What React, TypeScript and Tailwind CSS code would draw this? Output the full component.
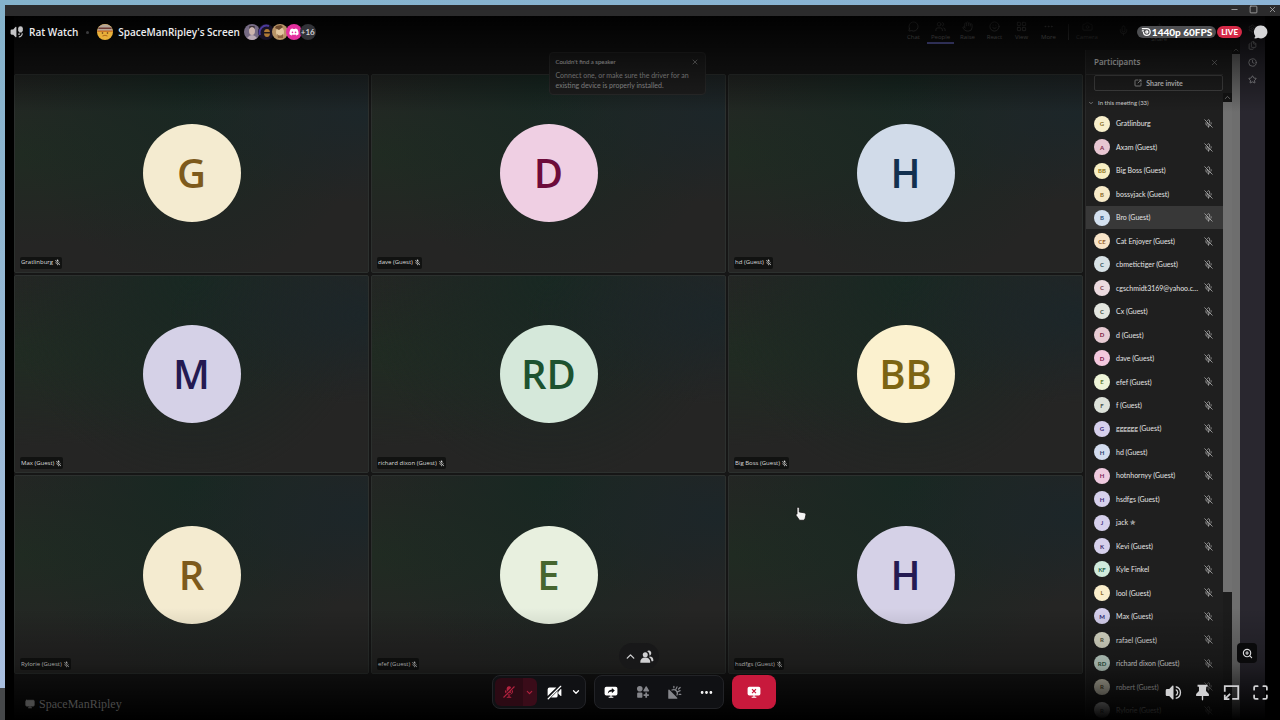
import React from 'react'
import { ChevronDown, ChevronUp, Clock, Hand, LayoutGrid, Camera, MessageCircle, Mic, MicOff, Monitor, MoreHorizontal, Minus, Settings, Share, Smile, Square, SquareArrowOutUpRight, Star, Users, X, ZoomIn, Files } from 'lucide-react'
import { MdMicOff } from 'react-icons/md'
import { FaDiscord } from 'react-icons/fa6'

type Tile = { initials: string; name: string; color: string }
type Participant = { initials: string; name: string; color: string; active?: boolean }

const tiles: Tile[] = [
  { initials: 'G', name: 'Gratlinburg', color: 'bg-[#f4ebd0] text-[#7d5a1c]' },
  { initials: 'D', name: 'dave (Guest)', color: 'bg-[#efcfe3] text-[#6d0b3a]' },
  { initials: 'H', name: 'hd (Guest)', color: 'bg-[#d1dbe9] text-[#12304f]' },
  { initials: 'M', name: 'Max (Guest)', color: 'bg-[#d5d1e7] text-[#241a52]' },
  { initials: 'RD', name: 'richard dixon (Guest)', color: 'bg-[#d5e8da] text-[#1d522f]' },
  { initials: 'BB', name: 'Big Boss (Guest)', color: 'bg-[#fbf1cf] text-[#7c6412]' },
  { initials: 'R', name: 'Rylorie (Guest)', color: 'bg-[#f4ebd0] text-[#7d5a1c]' },
  { initials: 'E', name: 'efef (Guest)', color: 'bg-[#e8f0df] text-[#46652f]' },
  { initials: 'H', name: 'hsdfgs (Guest)', color: 'bg-[#d5d1e7] text-[#241a52]' },
]

const participants: Participant[] = [
  { initials: 'G', name: 'Gratlinburg', color: 'bg-[#f8efcb] text-[#8a6f2a]' },
  { initials: 'A', name: 'Axam (Guest)', color: 'bg-[#e8c6d2] text-[#7a1f45]' },
  { initials: 'BB', name: 'Big Boss (Guest)', color: 'bg-[#f8efc4] text-[#8c7420]' },
  { initials: 'B', name: 'bossyjack (Guest)', color: 'bg-[#f8ebc9] text-[#8c6a2a]' },
  { initials: 'B', name: 'Bro (Guest)', color: 'bg-[#d3e0ef] text-[#2a4f7a]', active: true },
  { initials: 'CE', name: 'Cat Enjoyer (Guest)', color: 'bg-[#f8e4c8] text-[#96602a]' },
  { initials: 'C', name: 'cbmetictiger (Guest)', color: 'bg-[#d8e2e6] text-[#33525c]' },
  { initials: 'C', name: 'cgschmidt3169@yahoo.c...', color: 'bg-[#ecdadf] text-[#7a3a4a]' },
  { initials: 'C', name: 'Cx (Guest)', color: 'bg-[#e3e5df] text-[#4a4f45]' },
  { initials: 'D', name: 'd (Guest)', color: 'bg-[#e8ccd4] text-[#7a2040]' },
  { initials: 'D', name: 'dave (Guest)', color: 'bg-[#f4c8de] text-[#7a1048]' },
  { initials: 'E', name: 'efef (Guest)', color: 'bg-[#eef4d8] text-[#5e7a30]' },
  { initials: 'F', name: 'f (Guest)', color: 'bg-[#dde2da] text-[#44504a]' },
  { initials: 'G', name: 'gggggg (Guest)', color: 'bg-[#d6d0ec] text-[#3a2a78]' },
  { initials: 'H', name: 'hd (Guest)', color: 'bg-[#d3dcef] text-[#2a3f70]' },
  { initials: 'H', name: 'hotnhornyy (Guest)', color: 'bg-[#efcadf] text-[#7a1f58]' },
  { initials: 'H', name: 'hsdfgs (Guest)', color: 'bg-[#d6d0ec] text-[#3a2a78]' },
  { initials: 'J', name: 'jack ✯', color: 'bg-[#d6d0ec] text-[#4a3a88]' },
  { initials: 'K', name: 'Kevi (Guest)', color: 'bg-[#d6d0ec] text-[#3a2a68]' },
  { initials: 'KF', name: 'Kyle Finkel', color: 'bg-[#d0eadc] text-[#1f6248]' },
  { initials: 'L', name: 'lool (Guest)', color: 'bg-[#faeecb] text-[#8a6a2a]' },
  { initials: 'M', name: 'Max (Guest)', color: 'bg-[#d6d0ee] text-[#2a1f70]' },
  { initials: 'R', name: 'rafael (Guest)', color: 'bg-[#dedecb] text-[#55553a]' },
  { initials: 'RD', name: 'richard dixon (Guest)', color: 'bg-[#cfe3d8] text-[#2a5a44]' },
  { initials: 'R', name: 'robert (Guest)', color: 'bg-[#dedac6] text-[#5a5030]' },
  { initials: 'R', name: 'Rylorie (Guest)', color: 'bg-[#dedede] text-[#555555]' },
]

const toolbar = [
  { label: 'Chat', icon: MessageCircle },
  { label: 'People', icon: Users, active: true },
  { label: 'Raise', icon: Hand },
  { label: 'React', icon: Smile },
  { label: 'View', icon: LayoutGrid },
  { label: 'More', icon: MoreHorizontal },
]

const SpeakerIcon = ({ className }: { className: string }) => (
  <svg viewBox="0 0 24 24" className={className} fill="currentColor">
    <path d="M12 3.200a1 1 0 0 0-1.700-.7L6 7H3a2 2 0 0 0-2 2v6c0 1.100.9 2 2 2h3l4.300 4.500a1 1 0 0 0 1.700-.7z" />
    <path d="M15.200 7.200v2.100a3 3 0 0 1 0 5.400v2.100a5 5 0 0 0 0-9.600z" />
    <path d="M15.200 2.700v2.100a7.400 7.400 0 0 1 0 14.400v2.100a9.500 9.500 0 0 0 0-18.600z" />
  </svg>
)

// speaker with a small mic beside it, shown for a voice channel
const VoiceIcon = () => (
  <svg viewBox="0 0 24 24" className="size-[14px] text-[#c4c4c6]" fill="currentColor">
    <path d="M11 4a1 1 0 0 0-1.700-.7L5.500 7.500H3a2 2 0 0 0-2 2v5c0 1.100.9 2 2 2h2.500l3.800 4.200a1 1 0 0 0 1.700-.7z" />
    <path d="M14 6a4 4 0 0 1 8 0v4l-2 3h-4l-2-3z" />
    <path d="M14 14.500h3v2h-3zM20 14h2c0 4-3 7-7 7.500v-2c3-.4 5-2.600 5-5.500z" />
  </svg>
)

const MicSlashIcon = () => (
  <svg viewBox="0 0 24 24" className="size-[14px]" fill="currentColor">
    <path d="M8 6a4 4 0 0 1 7.700-1.500L8 12.200zM16 9.500V10a4 4 0 0 1-4.600 4zM5 10a1 1 0 0 1 2 0c0 1 .3 2 .8 2.800l-1.500 1.500A7 7 0 0 1 5 10zM9.900 15.500A5 5 0 0 0 17 10a1 1 0 1 1 2 0 7 7 0 0 1-6 6.900V20h2a1 1 0 1 1 0 2H9a1 1 0 1 1 0-2h2v-3.100a7 7 0 0 1-2.500-.9z" />
    <path d="M21.700 3.700a1 1 0 0 0-1.400-1.400l-18 18a1 1 0 0 0 1.400 1.400z" />
  </svg>
)

const CameraSlashIcon = () => (
  <svg viewBox="0 0 24 24" className="size-[15px]" fill="currentColor">
    <path d="M1 17.500V7a3 3 0 0 1 3-3h11zM6.500 20 17 9.500V17a3 3 0 0 1-3 3zM18 11l4-4.500c.5-.4 1 0 1 .6v10c0 .6-.5.9-1 .5L18 14z" />
    <path d="M22.700 2.700a1 1 0 0 0-1.400-1.400l-20 20a1 1 0 1 0 1.400 1.400z" />
  </svg>
)

const ScreenIcon = ({ className, stop = false }: { className: string; stop?: boolean }) => (
  <svg viewBox="0 0 24 24" className={className} fill="currentColor">
    <path fillRule="evenodd" d={stop
      ? 'M4 3h16a3 3 0 0 1 3 3v9a3 3 0 0 1-3 3h-7v2h3v2H8v-2h3v-2H4a3 3 0 0 1-3-3V6a3 3 0 0 1 3-3zm5.300 3.300L7.900 7.700l2.700 2.800-2.700 2.800 1.400 1.400 2.700-2.800 2.700 2.800 1.400-1.400-2.700-2.800 2.700-2.800-1.400-1.400L12 9z'
      : 'M4 3h16a3 3 0 0 1 3 3v9a3 3 0 0 1-3 3h-7v2h3v2H8v-2h3v-2H4a3 3 0 0 1-3-3V6a3 3 0 0 1 3-3zm9.500 2v2.500C9 7.800 6.800 10.500 6.500 15c1.500-2.700 3.700-3.700 7-3.800V14l5-4.500z'} />
  </svg>
)

const ActivitiesIcon = () => (
  <svg viewBox="0 0 24 24" className="size-[14px]" fill="currentColor">
    <circle cx="6.500" cy="6.500" r="4.800" />
    <path d="M16.600 2.600a1 1 0 0 1 1.800 0l4 7a1 1 0 0 1-.9 1.400h-8a1 1 0 0 1-.9-1.400z" />
    <rect x="2" y="13" width="9" height="9" rx="2" />
    <path d="M16 13h3v3h3v3h-3v3h-3v-3h-3v-3h3z" />
  </svg>
)

const SoundboardIcon = () => (
  <svg viewBox="0 0 24 24" className="size-[15px]" fill="none" stroke="currentColor" strokeWidth="2" strokeLinecap="round">
    <path d="M2 8.500V21c0 .6.400 1 1 1h12.500c1 0 1.500-1 .8-1.800L3.800 7.700C3.200 7 2 7.500 2 8.500z" fill="currentColor" stroke="none" />
    <path d="M8 8a6 6 0 0 1 8 8M11 2v2.500M16 3l-1.500 3.500M21 9l-3.500 1.500M22 15h-2.500M21 4l-2.500 2.500" />
  </svg>
)

const PeopleIcon = () => (
  <svg viewBox="0 0 24 24" className="size-[15px]" fill="currentColor">
    <circle cx="10" cy="9" r="4" />
    <path d="M2 21c0-5 3-7.500 8-7.500s8 2.500 8 7.500c0 .6-.4 1-1 1H3c-.6 0-1-.4-1-1z" />
    <path d="M13 3.500a4 4 0 1 1 3.500 6.900c.6-2.800-.6-5.300-3.500-6.900zM17 12c4 0 6 2.500 6 6.500 0 .6-.4 1-1 1h-2c-.3-3-1.500-5-3.800-6.300z" />
  </svg>
)

const PinIcon = () => (
  <svg viewBox="0 0 24 24" className="size-[17px]" fill="currentColor">
    <path d="M5 1h14v3h-2v6l4 4v3h-8v5l-1 1.500-1-1.500v-5H3v-3l4-4V4H5z" />
  </svg>
)

const PopoutIcon = () => (
  <svg viewBox="0 0 24 24" className="size-[17px]" fill="none" stroke="currentColor" strokeWidth="2.500">
    <path d="M2.500 11V3h19v18H13M10 14l-7.500 7.500M2.500 15v6.500H9" />
  </svg>
)

const FullscreenIcon = () => (
  <svg viewBox="0 0 24 24" className="size-[17px]" fill="none" stroke="currentColor" strokeWidth="2.500" strokeLinecap="round">
    <path d="M3 8V5a2 2 0 0 1 2-2h3M16 3h3a2 2 0 0 1 2 2v3M21 16v3a2 2 0 0 1-2 2h-3M8 21H5a2 2 0 0 1-2-2v-3" />
  </svg>
)

const StreamerAvatar = () => (
  <svg viewBox="0 0 16 16" className="size-4">
    <circle cx="8" cy="8" r="8" fill="#e8b03a" />
    <path d="M1 4.500a8 8 0 0 1 14 0l.6 2.500H.4z" fill="#b5a698" />
    <path d="M2 3.500h12L15 5H1z" fill="#6e3a34" />
    <path d="M.4 6.500h15.200v1.300H.2z" fill="#c4671f" />
    <circle cx="5.500" cy="9" r="0.800" fill="#5a3214" />
    <circle cx="10.500" cy="9" r="0.800" fill="#5a3214" />
    <path d="M5.500 12q2.500-1.500 5 0" stroke="#b3681b" fill="none" />
  </svg>
)

const Viewers = () => (
  <div className="ml-1 flex items-center">
    <svg viewBox="0 0 16 16" className="size-4">
      <circle cx="8" cy="8" r="8" fill="#756a83" />
      <ellipse cx="8" cy="7" rx="3" ry="4" fill="#cdb5ae" />
      <path d="M5 5q3-4 6 0l-.5-3h-5z" fill="#3d3238" />
      <path d="M3 14q5-6 10 0-5 4-10 0z" fill="#b9a9b4" />
    </svg>
    <svg viewBox="0 0 16 16" className="-ml-0.5 size-4">
      <circle cx="8" cy="8" r="8" fill="#191326" />
      <path d="M2 11a7 7 0 0 1 9-9" stroke="#4b3a9a" strokeWidth="2" fill="none" />
      <ellipse cx="9" cy="9" rx="3" ry="4" fill="#b07a35" />
      <path d="M6 8h6v1.500H6z" fill="#241a1a" />
    </svg>
    <svg viewBox="0 0 16 16" className="-ml-0.5 size-4">
      <circle cx="8" cy="8" r="8" fill="#b89467" />
      <ellipse cx="8" cy="8" rx="4" ry="5" fill="#e2c7a0" />
      <path d="M3 4l4 2 4-3-2-2-5 1z" fill="#6d4a2e" />
      <path d="M5 10q3 3 6 0v4H6z" fill="#8d6440" />
    </svg>
    <span className="-ml-0.5 flex size-4 items-center justify-center rounded-full bg-[#e4309f] text-white">
      <FaDiscord size={10} />
    </span>
    <span className="-ml-0.5 flex size-4 items-center justify-center rounded-full bg-[#323338] font-['Lato',sans-serif] text-[8px] font-bold text-[#d0d0d4]">+16</span>
  </div>
)

const VideoTile = ({ tile }: { tile: Tile }) => (
  <div className="relative flex items-center justify-center rounded-xs border border-[#2c302e] bg-[#252524] bg-[radial-gradient(ellipse_at_100%_20%,#1c2629_0%,transparent_40%),radial-gradient(ellipse_at_50%_0%,#182822_0%,transparent_75%),radial-gradient(ellipse_at_0%_40%,#202b22_0%,transparent_55%)]">
    <div className={`flex size-[98px] items-center justify-center rounded-full text-[40px] font-semibold ${tile.color}`}>
      {tile.initials}
    </div>
    <p className="absolute bottom-[3px] left-[5px] flex h-3 items-center gap-px rounded-xs bg-[#111211] px-px text-[6px] text-[#dadada]">
      {tile.name}
      <MdMicOff size={7} />
    </p>
  </div>
)

const ParticipantRow = ({ person }: { person: Participant }) => (
  <li className={person.active ? 'flex items-center bg-[#383838] pr-2.5 pl-2' : 'flex items-center pr-2.5 pl-2'}>
    <span className={`flex size-4 shrink-0 items-center justify-center rounded-full text-[6px] font-bold ${person.color}`}>
      {person.initials}
    </span>
    <span className="ml-1.5 whitespace-nowrap text-[7px] text-[#e4e4e4]">{person.name}</span>
    <MicOff size={9} strokeWidth={2} className="ml-auto text-[#b5b5b5]" />
  </li>
)

const App: React.FC = () => {
  return (
    <div className="flex h-screen overflow-hidden bg-black font-['Open_Sans','Noto_Sans',sans-serif] text-white">
      {/* desktop behind the window */}
      <div className="flex w-[5px] shrink-0 flex-col bg-[#46484a]">
        <div className="flex-1 bg-linear-to-b from-[#84b2cb] to-[#a9bfe0]" />
        <div className="h-8" />
      </div>

      <div className="relative flex min-w-0 flex-1 flex-col">
        <div className="h-[5px] shrink-0 bg-linear-to-r from-[#84b2cb] to-[#8cb4d6]" />
        <div className="relative z-10 flex h-[11px] shrink-0 items-start justify-end gap-[10px] bg-[#2b2b2c] pr-[3px] text-[#b4b4b4]">
          <button aria-label="Minimize"><Minus size={9} strokeWidth={2} /></button>
          <button aria-label="Maximize"><Square size={9} strokeWidth={2} /></button>
          <button aria-label="Close window"><X size={9} strokeWidth={2} /></button>
        </div>

        {/* shared screen */}
        <div className="flex min-h-0 flex-1 pr-[15px] pl-[9px]">
          <div className="flex min-w-0 flex-1 flex-col bg-[#161616]">
            <div className="flex h-[34px] shrink-0 items-start justify-end pr-[55px] text-[6px] text-[#b8b8b8]">
              {toolbar.map(({ label, icon: Icon, active }) => (
                <button key={label} className={active ? 'flex h-7 w-[27px] flex-col items-center justify-end gap-px border-b-2 border-[#8a8cff]' : 'flex h-7 w-[27px] flex-col items-center justify-end gap-px pb-0.5'}>
                  <Icon size={11} strokeWidth={1.5} />
                  {label}
                </button>
              ))}
              <span className="mt-2 ml-1.5 h-4 w-px bg-[#555555]" />
              <button className="flex h-7 w-9 flex-col items-center justify-end gap-px pb-0.5 text-[#666666]">
                <Camera size={11} strokeWidth={1.5} />
                Camera
              </button>
              <button aria-label="Mic" className="flex h-7 w-9 items-center justify-center text-[#666666]">
                <Mic size={11} strokeWidth={1.5} />
              </button>
              <button className="flex h-7 w-9 flex-col items-center justify-end gap-px text-[#888888]">
                <Share size={11} strokeWidth={1.5} />
                Share
              </button>
            </div>

            <div className="flex min-h-0 flex-1">
              <main className="relative flex flex-1 flex-col pt-6 pb-[46px]">
                <div className="grid flex-1 grid-cols-3 grid-rows-3 gap-0.5 pr-0.5">
                  {tiles.map((tile) => (
                    <VideoTile key={tile.name} tile={tile} />
                  ))}
                </div>
                <div role="alert" className="absolute top-0.5 left-1/2 w-[157px] -translate-x-px rounded-sm border border-[#2c2c2c] bg-[#1f1f1f] px-1.5 pt-1 pb-1 font-['Lato',sans-serif] text-[#a2a2a2]">
                  <div className="flex items-center justify-between text-[6px] text-[#e0e0e0]">
                    Couldn't find a speaker
                    <button aria-label="Dismiss"><X size={8} strokeWidth={1.5} /></button>
                  </div>
                  <p className="mt-1 text-[7px] leading-[10px]">
                    Connect one, or make sure the driver for an existing device is properly installed.
                  </p>
                </div>
              </main>

              <aside className="flex w-[138px] shrink-0 flex-col border-l border-[#2a2a2a] bg-[#1f1f1f] font-['Lato','DejaVu_Sans',sans-serif]">
                <div className="flex h-[25px] shrink-0 items-center justify-between border-b border-[#2e2e2e] pr-1 pl-2">
                  <h2 className="font-['Open_Sans',sans-serif] text-[8px] font-semibold text-[#e0e0e0]">Participants</h2>
                  <button aria-label="Close participants" className="text-[#b0b0b0]"><X size={9} strokeWidth={1.5} /></button>
                </div>
                <button className="ml-2 flex h-4 shrink-0 items-center justify-center gap-1 rounded-xs border border-[#444444] text-[7px] font-bold text-[#d6d6d6]">
                  <SquareArrowOutUpRight size={8} />
                  Share invite
                </button>
                <button className="flex h-[21px] shrink-0 items-center gap-1 pt-1.5 pb-1 pl-0.5 text-[6px] text-[#d8d8d8]">
                  <ChevronDown size={6} />
                  In this meeting (33)
                </button>
                <ul className="-mb-0.5 grid flex-1 auto-rows-fr">
                  {participants.map((person, index) => (
                    <ParticipantRow key={index} person={person} />
                  ))}
                </ul>
              </aside>

              {/* list scrollbar */}
              <div className="flex w-[9px] shrink-0 flex-col bg-[#1f1f1f] pt-[43px]">
                <ChevronUp size={9} className="shrink-0 bg-[#141414] text-[#8a8a8a]" />
                <div className="flex-[490] bg-[#717171]" />
                <div className="flex-[128] bg-[#1c1c1c]" />
              </div>
            </div>
          </div>

          {/* page scrollbar */}
          <div className="flex w-2 shrink-0 flex-col bg-[#161616] pt-[30px]">
            <ChevronUp size={8} className="shrink-0 text-[#8a8a8a]" />
            <div className="flex-1 bg-[#6e6e6e]" />
          </div>
          <nav className="flex w-[25px] shrink-0 flex-col items-center gap-2 bg-[#29272f] pt-2 text-[#b4b4b8]">
            <Settings size={9} />
            <Files size={9} />
            <Clock size={9} />
            <Star size={9} />
          </nav>
        </div>

        <div className="pointer-events-none absolute inset-x-0 top-4 h-24 bg-linear-to-b from-black/95 via-black/45 to-transparent" />
        <div className="pointer-events-none absolute inset-x-0 bottom-0 h-28 bg-linear-to-t from-black via-black/25 to-transparent" />

        {/* stream header */}
        <header className="absolute inset-x-0 top-[22px] flex h-5 items-center pr-3 pl-[5px] text-[10px] font-semibold text-[#ececee]">
          <VoiceIcon />
          <span className="ml-[5px]">Rat Watch</span>
          <span className="mx-2 size-[3px] rounded-full bg-[#3c3c3e]" />
          <StreamerAvatar />
          <h1 className="ml-[5px]">SpaceManRipley's Screen</h1>
          <Viewers />
          <span className="ml-auto flex h-3 items-center gap-px rounded-full bg-[#4e4f52] px-1 font-['Lato',sans-serif] text-[10px] font-black text-white">
            <svg viewBox="0 0 24 24" className="size-[10px]" fill="none" stroke="currentColor" strokeWidth="3">
              <path d="M2 4h12a8 8 0 1 1-8 8M2 9h5" />
              <circle cx="14" cy="12" r="2.500" />
            </svg>
            1440p 60FPS
          </span>
          <span className="ml-px flex h-3 items-center rounded-full bg-[#d42a47] px-1 font-['Lato',sans-serif] text-[8px] font-black text-white">LIVE</span>
          <button aria-label="Show chat" className="ml-3 text-[#d6d6d8]">
            <svg viewBox="0 0 24 24" className="size-[14px]" fill="currentColor">
              <path d="M12 1a11 11 0 1 1-5 20.800c-1.500.8-3.500 1.200-5.500 1.200-.8 0-1-.8-.5-1.400 1-1 1.300-2 1.100-3.200A11 11 0 0 1 12 1z" />
            </svg>
          </button>
        </header>

        <button aria-label="Zoom in" className="absolute right-[23px] bottom-[57px] flex size-5 items-center justify-center rounded-sm bg-[#0a0a0b] text-[#d8d8da]">
          <ZoomIn size={11} strokeWidth={2.5} />
        </button>

        <p className="absolute bottom-2 left-5 flex items-center gap-1 font-['Liberation_Serif',serif] text-[12px] leading-4 text-[#4a4a4a]">
          <Monitor size={10} fill="currentColor" />
          SpaceManRipley
        </p>

        {/* mouse pointer inside the shared screen */}
        <svg viewBox="0 0 16 20" className="absolute top-[506px] left-[790px] h-[15px] w-3" fill="#f4f4f4" stroke="#111111">
          <path d="M4 1.500c1 0 1.700.6 1.700 1.500v5l6.300 1c2 .4 2.800 1.400 2.500 3l-1 4.500-1.500 2.500H6L1.500 12.500c-.6-1 .2-2 1.200-1.600V3c0-.9.5-1.500 1.300-1.500z" />
        </svg>

        <button aria-label="Show members" className="absolute bottom-[51px] left-1/2 flex h-[26px] w-10 -translate-x-6 items-center justify-center gap-0.5 rounded-full bg-[#181819] text-[#d0d0d2]">
          <ChevronUp size={13} strokeWidth={2.5} />
          <PeopleIcon />
        </button>

        <footer className="absolute inset-x-0 bottom-[11px] flex items-center justify-center gap-2 pr-[18px]">
          <div className="flex h-[34px] items-center rounded-lg border border-[#222327] bg-[#101114] px-0.5">
            <button aria-label="Unmute" className="flex h-7 w-7 items-center justify-center rounded-l-md bg-[#2c0a14] text-[#b3223f]"><MicSlashIcon /></button>
            <button aria-label="Microphone options" className="flex h-7 w-[14px] items-center justify-center rounded-r-md bg-[#3a0c19] text-[#b3223f]"><ChevronDown size={9} strokeWidth={3} /></button>
            <button aria-label="Turn on camera" className="flex h-7 w-8 items-center justify-center pl-1"><CameraSlashIcon /></button>
            <button aria-label="Camera options" className="flex h-7 w-[14px] items-center justify-center"><ChevronDown size={10} strokeWidth={3} /></button>
          </div>
          <div className="flex h-[34px] items-center rounded-lg border border-[#222327] bg-[#101114]">
            <button aria-label="Share your screen" className="flex h-7 w-8 items-center justify-center"><ScreenIcon className="size-[14px]" /></button>
            <button aria-label="Activities" className="flex h-7 w-8 items-center justify-center text-[#85868b]"><ActivitiesIcon /></button>
            <button aria-label="Soundboard" className="flex h-7 w-8 items-center justify-center text-[#85868b]"><SoundboardIcon /></button>
            <button aria-label="More options" className="flex h-7 w-8 items-center justify-center"><MoreHorizontal size={15} strokeWidth={2.5} /></button>
          </div>
          <button aria-label="Stop streaming" className="flex h-[34px] w-11 items-center justify-center rounded-lg bg-[#c8193c]"><ScreenIcon className="size-[14px]" stop /></button>
        </footer>

        <div className="absolute right-[11px] bottom-[19px] flex items-center gap-3 text-[#d0d0d2]">
          <button aria-label="Volume"><SpeakerIcon className="size-[17px]" /></button>
          <button aria-label="Pin"><PinIcon /></button>
          <button aria-label="Pop out"><PopoutIcon /></button>
          <button aria-label="Full screen"><FullscreenIcon /></button>
        </div>
      </div>
    </div>
  )
}

export default App
